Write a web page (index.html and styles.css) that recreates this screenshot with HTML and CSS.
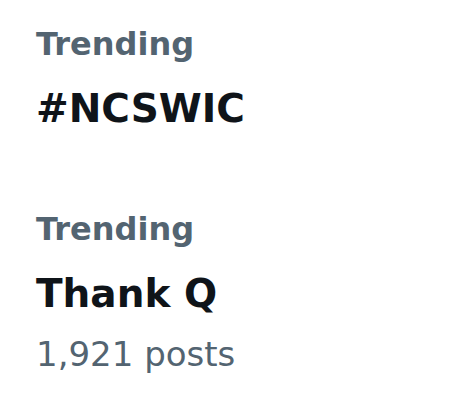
FILE: index.html
```html
<!DOCTYPE html>
<html>
<head>
<meta charset="utf-8">
<link rel="stylesheet" href="styles.css">
</head>
<body>
<main class="list">
  <section class="trend">
    <div class="label">Trending</div>
    <div class="title">#NCSWIC</div>
  </section>
  <section class="trend">
    <div class="label">Trending</div>
    <div class="title">Thank Q</div>
    <div class="count">1,921 posts</div>
  </section>
</main>
</body>
</html>
```
FILE: styles.css
```css
html, body {
  margin: 0;
  background: #ffffff;
}
.list {
  display: flex;
  flex-direction: column;
  gap: 65px;
  padding: 22px 0 0 36px;
  font-family: "DejaVu Sans", "Liberation Sans", sans-serif;
}
.trend {
  display: flex;
  flex-direction: column;
}
.label {
  font-weight: 700;
  font-size: 32px;
  line-height: 44px;
  color: #536471;
}
.title {
  margin-top: 10px;
  font-weight: 700;
  font-size: 39px;
  line-height: 66px;
  color: #0f1419;
}
.count {
  font-weight: 400;
  font-size: 34px;
  line-height: 55px;
  color: #536471;
}
```
